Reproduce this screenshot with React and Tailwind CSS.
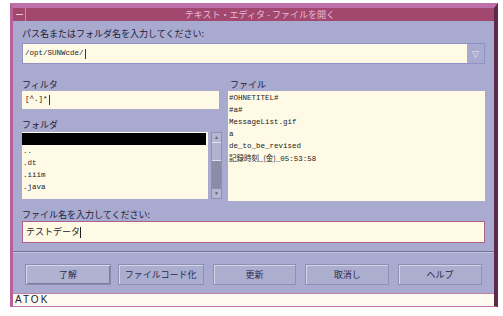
import React from "react";

const jp = { fontFamily: '"Noto Sans CJK JP", "Noto Sans", sans-serif' };
const mono = { fontFamily: '"Liberation Mono", "DejaVu Sans Mono", monospace' };

const folders = ["..", ".dt", ".iiim", ".java"];
const files = [
  "#OHNETITEL#",
  "#a#",
  "MessageList.gif",
  "a",
  "de_to_be_revised",
  "記録時刻_(金)_05:53:58",
];

function Button({ children, primary }) {
  return (
    <div
      className={
        "flex h-[21px] items-center justify-center border text-[9px] text-[#2a2a4a] " +
        (primary
          ? "border-[#8a8cae] bg-[#b0b2d2] shadow-[inset_1px_1px_0_#d8d8ec,inset_-1px_-1px_0_#7c7ea0]"
          : "border-[#8e90b2] bg-[#acaed0] shadow-[inset_1px_1px_0_#d4d4ea]")
      }
      style={jp}
    >
      {children}
    </div>
  );
}

export default function App() {
  return (
    <div className="h-[316px] w-[503px] overflow-hidden bg-white">
      <div className="ml-[10px] mt-[3px] flex h-[304px] w-[488px] flex-col border-l-[3px] border-r-[4px] border-t-[5px] border-b border-l-[#b8609a] border-r-[#5a2a48] border-t-[#c070a8] border-b-[#c070a8]">
        {/* barra de título */}
        <div className="flex h-[13px] items-center bg-[#a2486e]">
          <div className="flex h-[13px] w-[13px] items-center justify-center border-r border-[#d08cb0]">
            <div className="h-px w-[7px] bg-[#f0c8dc]" />
          </div>
          <div
            className="flex-1 text-center text-[9px] leading-none text-[#e8bcd4]"
            style={jp}
          >
            テキスト・エディタ - ファイルを開く
          </div>
        </div>

        <div className="flex flex-1 flex-col bg-[#a8aacf] px-[9px] pt-[6px]">
          <div className="h-[13px] text-[9px] leading-[13px] text-[#22223a]" style={jp}>
            パス名またはフォルダ名を入力してください:
          </div>
          <div className="mt-[3px] flex h-[21px] border border-[#8e92c4]">
            <div className="flex flex-1 items-center bg-[#fffae6] pl-[2px] text-[7.5px] text-[#222]" style={mono}>
              /opt/SUNWcde/<span className="ml-px h-[10px] w-px bg-[#333]" />
            </div>
            <div className="flex w-[17px] items-center justify-center bg-[#a8aacf] text-[9px] text-[#e8e8f4]">
              ▽
            </div>
          </div>

          <div className="mt-[14px] flex gap-[6px]">
            <div className="flex w-[200px] flex-col">
              <div className="h-[13px] text-[9px] leading-[13px] text-[#22223a]" style={jp}>
                フィルタ
              </div>
              <div className="flex h-[18px] w-[197px] items-center bg-[#fffae6] pl-[3px] text-[7.5px] text-[#222]" style={mono}>
                [^.]*<span className="ml-px h-[10px] w-px bg-[#333]" />
              </div>
              <div className="mt-[9px] h-[13px] text-[9px] leading-[13px] text-[#22223a]" style={jp}>
                フォルダ
              </div>
              <div className="mt-[1px] flex h-[67px] gap-[3px]">
                <div className="flex w-[186px] flex-col bg-[#fffae6] pt-px text-[7.5px] leading-[12px] text-[#222]" style={mono}>
                  <div className="mr-[2px] h-[12px] bg-black" />
                  {folders.map((f) => (
                    <div key={f} className="h-[12px] pl-px">
                      {f}
                    </div>
                  ))}
                </div>
                <div className="flex w-[11px] flex-col border border-[#8e90b0] bg-[#8a8ca8]">
                  <div className="flex h-[9px] items-center justify-center bg-[#b4b6d4] text-[5px] text-[#666]">▲</div>
                  <div className="h-[19px] border-y border-[#e0e0ee] bg-[#b0b2d0]" />
                  <div className="flex-1" />
                  <div className="flex h-[9px] items-center justify-center bg-[#b4b6d4] text-[5px] text-[#666]">▼</div>
                </div>
              </div>
            </div>

            <div className="flex flex-1 flex-col">
              <div className="h-[13px] pl-[2px] text-[9px] leading-[13px] text-[#22223a]" style={jp}>
                ファイル
              </div>
              <div className="flex h-[110px] flex-col bg-[#fffae6] pl-px pt-px text-[7.5px] leading-[12px] text-[#222]" style={mono}>
                {files.map((f) => (
                  <div key={f} className="h-[12px] whitespace-nowrap">
                    {f.startsWith("記録") ? (
                      <>
                        <span style={jp}>記録時刻_(金)</span>_05:53:58
                      </>
                    ) : (
                      f
                    )}
                  </div>
                ))}
              </div>
            </div>
          </div>

          <div className="mt-[8px] h-[11px] text-[9px] leading-[11px] text-[#22223a]" style={jp}>
            ファイル名を入力してください:
          </div>
          <div className="mt-px flex h-[22px] items-center border border-[#b0608e] bg-[#fffae6] pl-[3px] text-[9px] text-[#222]" style={jp}>
            テストデータ<span className="h-[11px] w-px bg-[#222]" />
          </div>

          <div className="-mx-[9px] mt-[8px] h-px bg-[#6e7298]" />
          <div className="-mx-[9px] h-px bg-[#c4c6e0]" />

          <div className="mt-[11px] flex gap-[7px] px-[3px]">
            <div className="w-[86px]"><Button primary>了解</Button></div>
            <div className="w-[86px]"><Button>ファイルコード化</Button></div>
            <div className="ml-[2px] w-[84px]"><Button>更新</Button></div>
            <div className="ml-[2px] w-[84px]"><Button>取消し</Button></div>
            <div className="ml-[2px] w-[84px]"><Button>ヘルプ</Button></div>
          </div>
        </div>

        <div className="flex h-[13px] items-center border-t border-[#c080a8] bg-[#fffbee] pl-[2px] text-[10px] leading-none tracking-[2px] text-[#1a1a40]" style={{ fontFamily: '"Liberation Sans", sans-serif' }}>
          ATOK
        </div>
      </div>
    </div>
  );
}
